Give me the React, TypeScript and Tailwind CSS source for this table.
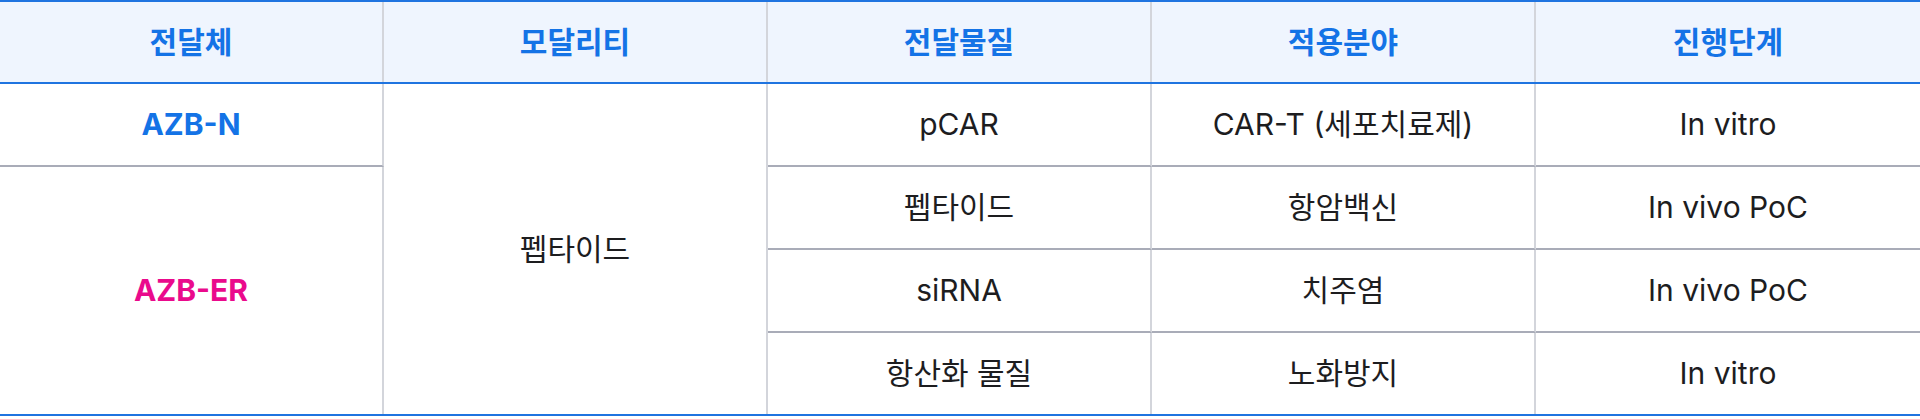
const font = "font-['Inter','Noto_Sans_CJK_KR',sans-serif]";

const headers = ["전달체", "모달리티", "전달물질", "적용분야", "진행단계"];

const rows = [
  { material: "pCAR", field: "CAR-T (세포치료제)", stage: "In vitro" },
  { material: "펩타이드", field: "항암백신", stage: "In vivo PoC" },
  { material: "siRNA", field: "치주염", stage: "In vivo PoC" },
  { material: "항산화 물질", field: "노화방지", stage: "In vitro" },
];

const cell = "flex items-center justify-center text-[30px] text-[#1d1d1f]";
const vline = "border-r-2 border-r-[#d3d5db]";
const hline = "border-b-2 border-b-[#a9acb8]";

export default function App() {
  return (
    <div className={`${font} w-[1920px] h-[419px] bg-white`}>
      <div className="border-t-2 border-b-2 border-[#1f74e0]">
        <div className="grid grid-cols-5 h-[82px] bg-[#eff5fe] border-b-2 border-b-[#1f74e0]">
          {headers.map((h, i) => (
            <div
              key={h}
              className={`flex items-center justify-center text-[30px] font-bold text-[#1473e6] ${
                i < 4 ? vline : ""
              }`}
            >
              {h}
            </div>
          ))}
        </div>

        <div className="grid grid-cols-5 grid-rows-[83px_83px_83px_81px]">
          <div className={`${cell} ${vline} ${hline} col-start-1 row-start-1 font-bold text-[#1473e6]`}>
            AZB-N
          </div>
          <div className={`${cell} ${vline} col-start-1 row-start-2 row-span-3 font-bold text-[#ea0a8c]`}>
            AZB-ER
          </div>
          <div className={`${cell} ${vline} col-start-2 row-start-1 row-span-4`}>펩타이드</div>

          {rows.map((r, i) => {
            const last = i === rows.length - 1;
            return [
              <div key={`m${i}`} className={`${cell} ${vline} ${last ? "" : hline} col-start-3`}>
                {r.material}
              </div>,
              <div key={`f${i}`} className={`${cell} ${vline} ${last ? "" : hline} col-start-4`}>
                {r.field}
              </div>,
              <div key={`s${i}`} className={`${cell} ${last ? "" : hline} col-start-5`}>
                {r.stage}
              </div>,
            ];
          })}
        </div>
      </div>
    </div>
  );
}
